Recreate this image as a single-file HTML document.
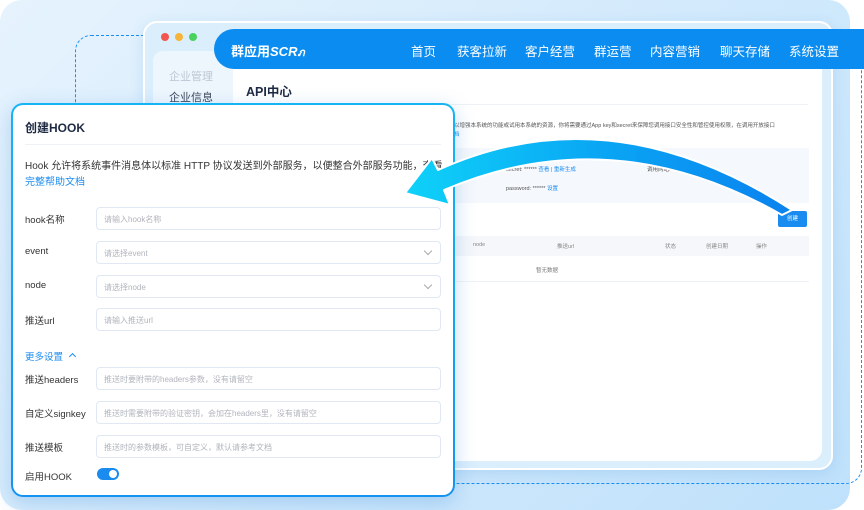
<!DOCTYPE html>
<html><head><meta charset="utf-8"><style>
*{margin:0;padding:0;box-sizing:border-box}
body{width:864px;height:510px;overflow:hidden;background:#fff;font-family:"Liberation Sans","Noto Sans CJK SC",sans-serif;position:relative}
.bg{position:absolute;left:0;top:0;width:850px;height:510px;border-radius:22px;background:linear-gradient(135deg,#e6f3fd 0%,#d3eafc 50%,#bfe1fb 100%)}
.dash{position:absolute;left:75px;top:35px;width:787px;height:449px;border:1.3px dashed #1a8ef0;border-radius:16px}
.win{position:absolute;left:143px;top:21px;width:690px;height:449px;border-radius:14px;background:#daeefc;border:2px solid #fff;box-shadow:0 4px 14px rgba(80,150,220,.2)}
.dot{position:absolute;top:10px;width:8px;height:8px;border-radius:50%}
.side{position:absolute;left:153px;top:51px;width:90px;height:420px;background:#eef6fd;border-radius:10px}
.side div{position:absolute;left:16px;font-size:11px}
.main{position:absolute;left:233px;top:69px;width:589px;height:392px;background:#fff;border-radius:0 0 12px 0}
.nav{position:absolute;left:214px;top:29px;width:650px;height:40px;background:#0b8cf0;border-radius:20px 0 0 20px;color:#fff}
.nav .logo{position:absolute;left:17px;top:12px;font-size:13px;font-weight:bold}
.nav .it{position:absolute;top:12px;font-size:12.5px}
.tiny{position:absolute;font-size:5.5px;color:#555}
.dlg{position:absolute;left:11px;top:103px;width:444px;height:394px;border-radius:12px;background:linear-gradient(180deg,#16b4f4,#1494f0);padding:2px;box-shadow:0 6px 20px rgba(60,140,220,.3)}
.dlgin{position:relative;width:100%;height:100%;background:#fff;border-radius:10px}
.lb{position:absolute;left:12px;font-size:9.5px;color:#333}
.in{position:absolute;left:83px;width:345px;height:23px;border:1px solid #e0e8f4;border-radius:4px;font-size:8px;color:#b0b4bc;padding:6px 7px}
.chev{position:absolute;right:9px;top:6px;width:6px;height:6px;border-right:1px solid #aaa;border-bottom:1px solid #aaa;transform:rotate(45deg)}
</style></head><body>
<div class="bg"></div>
<div class="dash"></div>
<div class="win">
 <div class="dot" style="left:16px;background:#f2564e"></div>
 <div class="dot" style="left:30px;background:#f6b43a"></div>
 <div class="dot" style="left:44px;background:#4bd160"></div>
</div>
<div class="side"><div style="top:17px;color:#bcc6d2">企业管理</div><div style="top:38px;color:#3a4456">企业信息</div></div>
<div class="main">
 <div style="position:absolute;left:13px;top:12px;font-size:12.5px;font-weight:bold;color:#1e2a44">API中心</div>
 <div style="position:absolute;left:13px;right:14px;top:35px;height:1px;background:#eef2f7"></div>
 <div class="tiny" style="left:221px;top:52px">以增强本系统的功能或试用本系统的资源，你将需要通过App key和secret来保障您调用接口安全性和管控使用权限，在调用开放接口</div>
 <div class="tiny" style="left:221px;top:61px;color:#1a8cf0">档</div>
 <div style="position:absolute;left:221px;top:79px;width:355px;height:55px;background:#f5f8fc"></div>
 <div class="tiny" style="left:273px;top:96px">secret: ****** <span style="color:#1a8cf0">查看 | 重新生成</span></div>
 <div class="tiny" style="left:414px;top:96px">调用网站: - - <span style="color:#1a8cf0">设置</span></div>
 <div class="tiny" style="left:273px;top:115px">password: ****** <span style="color:#1a8cf0">设置</span></div>
 <div style="position:absolute;left:545px;top:142px;width:29px;height:16px;background:#1a8cf0;border-radius:2px;color:#fff;font-size:5.5px;text-align:center;line-height:16px">创建</div>
 <div style="position:absolute;left:221px;top:167px;width:355px;height:20px;background:#f5f7fa"></div>
 <div class="tiny" style="left:240px;top:173px;color:#888">node</div>
 <div class="tiny" style="left:324px;top:173px;color:#888">推送url</div>
 <div class="tiny" style="left:432px;top:173px;color:#888">状态</div>
 <div class="tiny" style="left:473px;top:173px;color:#888">创建日期</div>
 <div class="tiny" style="left:523px;top:173px;color:#888">操作</div>
 <div class="tiny" style="left:303px;top:197px;color:#777">暂无数据</div>
 <div style="position:absolute;left:221px;top:212px;width:355px;height:1px;background:#eef2f7"></div>
</div>
<div class="nav">
 <div class="logo">群应用<i>SCR</i><i style="font-size:11px">ภ</i></div>
 <div class="it" style="left:197px">首页</div>
 <div class="it" style="left:243px">获客拉新</div>
 <div class="it" style="left:311px">客户经营</div>
 <div class="it" style="left:380px">群运营</div>
 <div class="it" style="left:436px">内容营销</div>
 <div class="it" style="left:506px">聊天存储</div>
 <div class="it" style="left:575px">系统设置</div>
</div>
<div class="dlg"><div class="dlgin">
 <div style="position:absolute;left:12px;top:14px;font-size:12px;font-weight:bold;color:#1e2a44">创建HOOK</div>
 <div style="position:absolute;left:12px;right:12px;top:39px;height:1px;background:#eef2f7"></div>
 <div style="position:absolute;left:12px;top:52px;font-size:10px;color:#333;white-space:nowrap;width:418px;overflow:hidden">Hook 允许将系统事件消息体以标准 HTTP 协议发送到外部服务，以便整合外部服务功能，查看</div>
 <div style="position:absolute;left:12px;top:68px;font-size:10px;color:#1a8cf0">完整帮助文档</div>
 <div class="lb" style="top:107px">hook名称</div><div class="in" style="top:102px">请输入hook名称</div>
 <div class="lb" style="top:141px">event</div><div class="in" style="top:136px">请选择event<div class="chev"></div></div>
 <div class="lb" style="top:175px">node</div><div class="in" style="top:170px">请选择node<div class="chev"></div></div>
 <div class="lb" style="top:208px">推送url</div><div class="in" style="top:203px">请输入推送url</div>
 <div class="lb" style="top:244px;color:#1a8cf0">更多设置 <span style="display:inline-block;width:5px;height:5px;border-left:1.3px solid #1a8cf0;border-top:1.3px solid #1a8cf0;transform:rotate(45deg);margin-left:4px;vertical-align:1px"></span></div>
 <div class="lb" style="top:267px">推送headers</div><div class="in" style="top:262px">推送时要附带的headers参数，没有请留空</div>
 <div class="lb" style="top:301px">自定义signkey</div><div class="in" style="top:296px">推送时需要附带的验证密钥，会加在headers里，没有请留空</div>
 <div class="lb" style="top:335px">推送模板</div><div class="in" style="top:330px">推送时的参数模板，可自定义，默认请参考文档</div>
 <div class="lb" style="top:364px">启用HOOK</div>
 <div style="position:absolute;left:84px;top:363px;width:22px;height:12px;border-radius:6px;background:#1a8cf0"><div style="position:absolute;right:2px;top:2px;width:8px;height:8px;border-radius:50%;background:#fff"></div></div>
</div></div>
<svg width="864" height="510" style="position:absolute;left:0;top:0">
 <defs><linearGradient id="g" x1="400" y1="0" x2="800" y2="0" gradientUnits="userSpaceOnUse"><stop offset="0" stop-color="#0fd3f8"/><stop offset=".5" stop-color="#0aa6f4"/><stop offset="1" stop-color="#0a80ee"/></linearGradient></defs>
 <path d="M405,193 L432,158 L438,170 Q610,92 792,210 L782,215 Q612,118 444,190 L450,205 Z" fill="url(#g)" stroke="#fff" stroke-width="2" stroke-linejoin="round"/>
</svg>
</body></html>
